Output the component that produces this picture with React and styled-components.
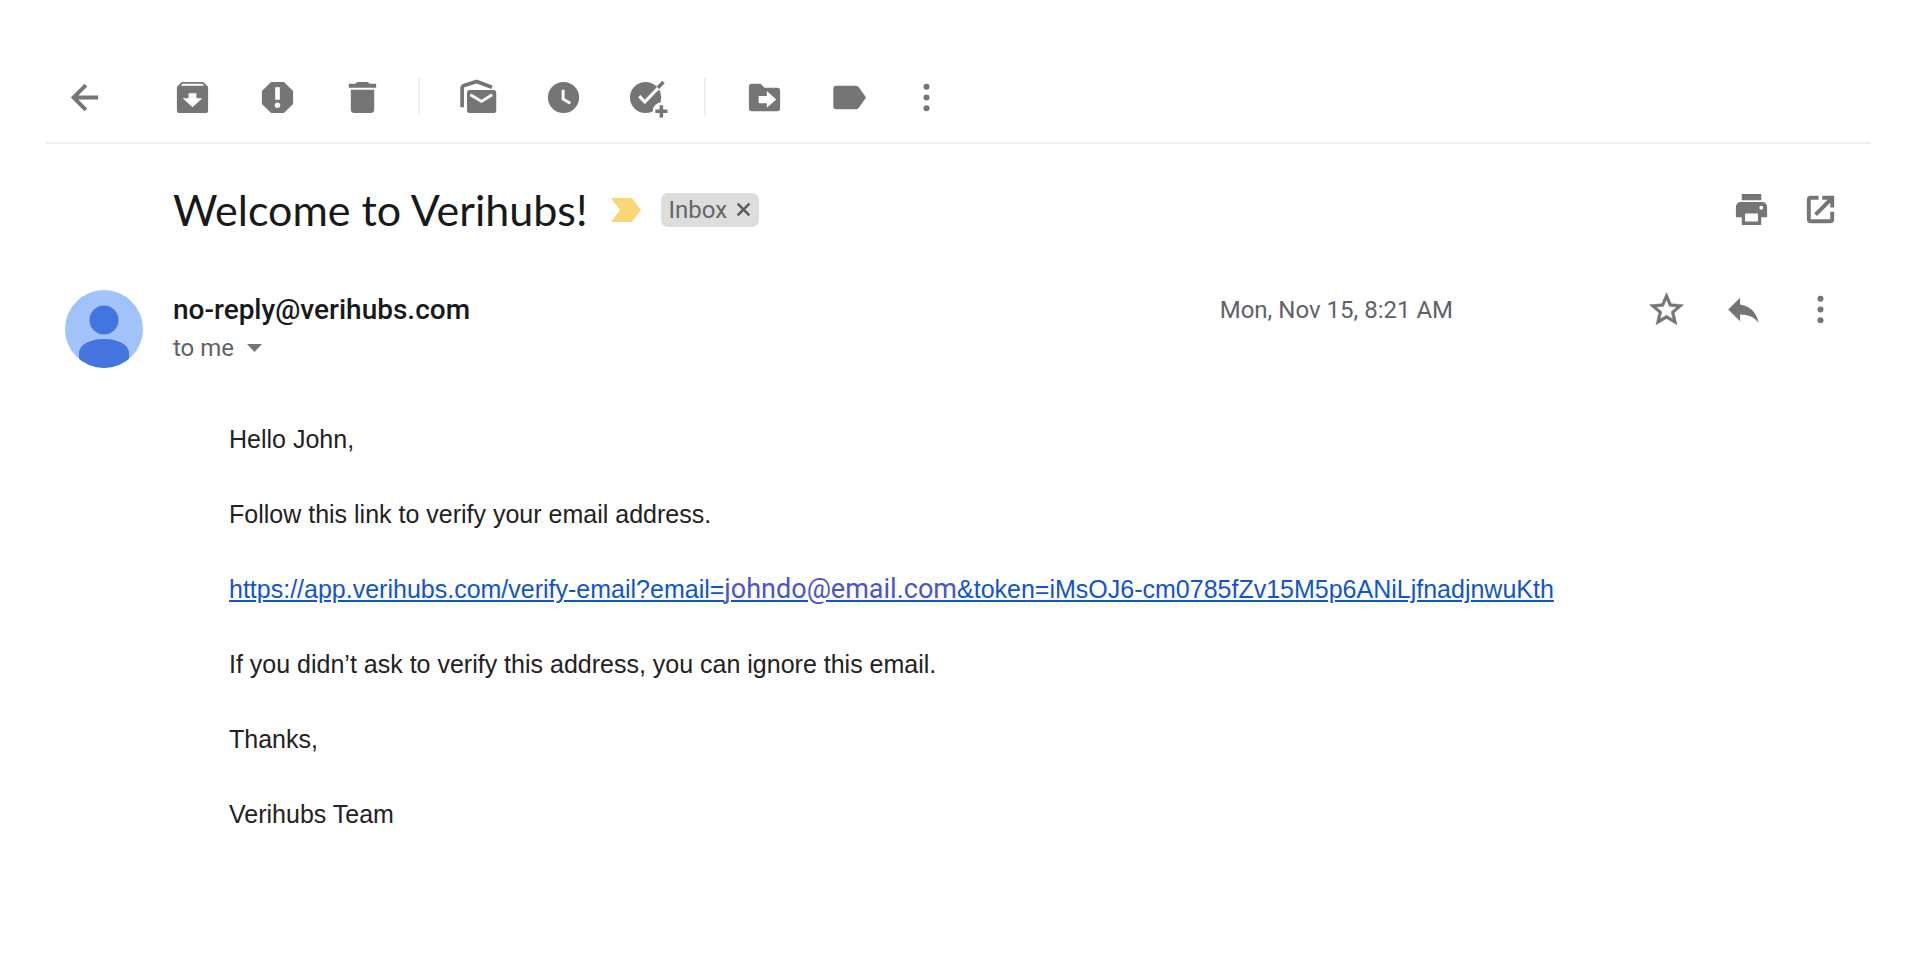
import React from "react";
import styled, { createGlobalStyle } from "styled-components";

const GlobalStyle = createGlobalStyle`
  *, *::before, *::after { box-sizing: border-box; }
  body {
    margin: 0;
    background: #fff;
    color: #18191b;
    font-family: Roboto, "Liberation Sans", sans-serif;
  }
  p, h1, h2 { margin: 0; }
`;

const Page = styled.main`
  padding: 52px 49px 120px 46px;
`;

const Toolbar = styled.header`
  display: flex;
  align-items: center;
  height: 92px;
  padding-left: 19px;
  border-bottom: 2px solid #eeeff0;
`;

const Group = styled.div`
  display: flex;
  gap: 46px;
  margin-left: ${(p) => p.$offset || 0}px;
`;

const Divider = styled.span`
  width: 2px;
  height: 38px;
  margin-left: 36px;
  background: #eeeff0;
`;

const IconButton = styled.button`
  display: flex;
  flex: none;
  width: 39px;
  height: 39px;
  padding: 0;
  border: 0;
  background: none;
  color: #757575;
  cursor: pointer;
`;

const Drawing = styled.svg`
  display: block;
  width: 100%;
  height: 100%;
  overflow: visible;
  fill: currentColor;
`;

const SubjectRow = styled.div`
  display: flex;
  align-items: center;
  height: 131px;
  padding: 0 31px 0 127px;
`;

const Subject = styled.h1`
  font: 400 43px/52px Lato, Roboto, sans-serif;
`;

const Marker = styled.svg`
  width: 30px;
  height: 24px;
  margin-left: 23px;
  fill: #fad776;
`;

const Chip = styled.span`
  display: flex;
  align-items: center;
  gap: 9px;
  height: 34px;
  margin-left: 20px;
  padding: 0 8px;
  border-radius: 7px;
  background: #ddd;
  color: #666;
  font-size: 24px;
  line-height: 34px;
`;

const ChipClose = styled.button`
  width: 15px;
  height: 15px;
  padding: 0;
  border: 0;
  background: none;
  color: #5a5a5a;
  cursor: pointer;
`;

const Actions = styled.div`
  display: flex;
  gap: ${(p) => p.$gap}px;
  margin-left: ${(p) => (p.$push ? "auto" : "194px")};
`;

const SenderRow = styled.div`
  display: flex;
  align-items: flex-start;
  padding: 15px 31px 0 19px;
`;

const Avatar = styled.svg`
  width: 78px;
  height: 78px;
  flex: none;
`;

const Sender = styled.div`
  margin-left: 30px;
`;

const Name = styled.h2`
  font-size: 28px;
  font-weight: 500;
  line-height: 40px;
`;

const Recipient = styled.button`
  display: flex;
  align-items: center;
  gap: 13px;
  padding: 0;
  border: 0;
  background: none;
  color: #5f6368;
  font: 400 24px/36px Roboto, sans-serif;
  cursor: pointer;
`;

const Caret = styled.svg`
  width: 15px;
  height: 8px;
  fill: #757575;
`;

const SentAt = styled.time`
  margin-left: auto;
  color: #5f6368;
  font-size: 24px;
  line-height: 40px;
`;

const Message = styled.article`
  display: flex;
  flex-direction: column;
  gap: 40px;
  padding: 54px 0 0 183px;
  color: #222;
  font: 400 25px/35px "Liberation Sans", Arial, sans-serif;
`;

const VerifyLink = styled.a`
  color: #15c;
  overflow-wrap: anywhere;
`;

const Address = styled.span`
  color: #4a55cc;
  font-family: Roboto, sans-serif;
  font-size: 27px;
`;

const shapes = {
  back: <path d="M17 9H6.83l4.6-4.6L10 3l-7 7 7 7 1.41-1.4L6.83 11H17z" />,
  archive: (
    <path
      fillRule="evenodd"
      d="M4.5 2h11L18 4.5v12a1.5 1.5 0 0 1-1.5 1.5h-13A1.5 1.5 0 0 1 2 16.5v-12zM4.8 2.9 4 4h12l-.8-1.1zM8 7.8v2.6H5l5 4.6 5-4.6h-3V7.8z"
    />
  ),
  spam: (
    <path
      fillRule="evenodd"
      d="M6.7 2h6.6L18 6.7v6.6L13.3 18H6.7L2 13.3V6.7zM8.8 4.8v6.4h2.4V4.8zM10 12.6a1.4 1.4 0 1 0 0 2.8 1.4 1.4 0 0 0 0-2.8z"
    />
  ),
  trash: <path d="M7.3 2h5.4l.9 1H17v2H3V3h3.4zM4 6h12v10.2a1.8 1.8 0 0 1-1.8 1.8H5.8A1.8 1.8 0 0 1 4 16.2z" />,
  unread: (
    <>
      <path d="M1.6 15V5q0-.7.6-1L9 1.8l7.9 2.900" fill="none" stroke="currentColor" strokeWidth="1.9" />
      <rect x="4.1" y="6.2" width="15" height="11.8" rx="1.5" />
      <path d="m5.9 8.6 5.6 3.4 5.5-3.4" fill="none" stroke="#fff" strokeWidth="1.5" />
    </>
  ),
  clock: (
    <>
      <circle cx="10" cy="10" r="8" />
      <path d="M9.8 6v4.8l3.7 2.2" fill="none" stroke="#fff" strokeWidth="1.5" />
    </>
  ),
  task: (
    <>
      <circle cx="8.5" cy="10" r="8" />
      <path d="m5.3 9.3 2.8 3L16.5 3.5" fill="none" stroke="#fff" strokeWidth="1.6" />
      <path d="m14.8 5 2.9-2.900" fill="none" stroke="currentColor" strokeWidth="1.8" />
      <circle cx="16.8" cy="17" r="4.6" fill="#fff" />
      <path d="M16.6 14v6.2M13.5 17.1h6.2" fill="none" stroke="currentColor" strokeWidth="1.8" />
    </>
  ),
  move: (
    <path
      fillRule="evenodd"
      d="M3.5 3H8l2 2h6.5A1.5 1.5 0 0 1 18 6.5v9a1.5 1.5 0 0 1-1.5 1.5h-13A1.5 1.5 0 0 1 2 15.5v-11A1.5 1.5 0 0 1 3.5 3zM7 9.2v3.7h4.2v2.4L16 11l-4.8-4.3v2.5z"
    />
  ),
  label: <path d="M3.2 4h10q1 0 1.6.8L18.5 10l-3.7 5.2q-.6.8-1.6.8h-10a1.5 1.5 0 0 1-1.5-1.5v-9A1.5 1.5 0 0 1 3.2 4z" />,
  more: (
    <>
      <circle cx="10" cy="4.5" r="1.55" />
      <circle cx="10" cy="10" r="1.55" />
      <circle cx="10" cy="15.5" r="1.55" />
    </>
  ),
  print: (
    <path
      fillRule="evenodd"
      d="M5 2h10v3.2H5zM4.4 6.2h11.2A2.4 2.4 0 0 1 18 8.6V14h-3v4H5v-4H2V8.6a2.4 2.4 0 0 1 2.4-2.4zM6.7 12v4.2h6.6V12zM15 8.1a1 1 0 1 0 0 2 1 1 0 0 0 0-2z"
    />
  ),
  popout: (
    <>
      <path d="M9 4H5a1 1 0 0 0-1 1v10a1 1 0 0 0 1 1h10a1 1 0 0 0 1-1V11.2" fill="none" stroke="currentColor" strokeWidth="2" />
      <path d="M10.9 3H17v6h-2V6.5l-6.8 6.8-1.400-1.400L13.600 5h-2.700z" />
    </>
  ),
  star: (
    <path d="M22 9.24l-7.19-.62L12 2 9.19 8.63 2 9.24l5.46 4.73L5.82 21 12 17.27 18.18 21l-1.63-7.03L22 9.24zM12 15.4l-3.76 2.27 1-4.28-3.32-2.88 4.38-.38L12 6.1l1.71 4.04 4.38.38-3.32 2.88 1 4.28L12 15.4z" stroke="currentColor" strokeWidth="0.3" />
  ),
  reply: <path d="M10 9V5l-7 7 7 7v-4.1c5 0 8.5 1.6 11 5.1-1-5-4-10-11-11z" />,
};

function Action({ icon, label, viewBox = "0 0 20 20" }) {
  return (
    <IconButton type="button" aria-label={label} title={label}>
      <Drawing viewBox={viewBox} aria-hidden="true">
        {shapes[icon]}
      </Drawing>
    </IconButton>
  );
}

export default function App() {
  return (
    <>
      <GlobalStyle />
      <Page>
        <Toolbar>
          <Group>
            <Action icon="back" label="Back" />
          </Group>
          <Group $offset={69}>
            <Action icon="archive" label="Archive" />
            <Action icon="spam" label="Report spam" />
            <Action icon="trash" label="Delete" />
          </Group>
          <Divider />
          <Group $offset={39}>
            <Action icon="unread" label="Mark as unread" />
            <Action icon="clock" label="Snooze" />
            <Action icon="task" label="Add to tasks" />
          </Group>
          <Divider />
          <Group $offset={39}>
            <Action icon="move" label="Move to" />
            <Action icon="label" label="Labels" />
          </Group>
          <Group $offset={38}>
            <Action icon="more" label="More" />
          </Group>
        </Toolbar>

        <SubjectRow>
          <Subject>Welcome to Verihubs!</Subject>
          <Marker viewBox="0 0 30 24" aria-hidden="true">
            <path d="M0 0h19q2 0 3 1.5L30 12l-8 10.500Q21 24 19 24H0l9-12z" />
          </Marker>
          <Chip>
            Inbox
            <ChipClose type="button" aria-label="Remove label Inbox">
              <Drawing viewBox="0 0 14 14" aria-hidden="true">
                <path d="m1.5 1.5 11 11m0-11-11 11" stroke="currentColor" strokeWidth="2.3" />
              </Drawing>
            </ChipClose>
          </Chip>
          <Actions $push $gap={30}>
            <Action icon="print" label="Print" />
            <Action icon="popout" label="Open in new window" />
          </Actions>
        </SubjectRow>

        <SenderRow>
          <Avatar viewBox="0 0 78 78" role="img" aria-label="Sender">
            <clipPath id="face">
              <circle cx="39" cy="39" r="39" />
            </clipPath>
            <g clipPath="url(#face)">
              <rect width="78" height="78" fill="#a1c2fa" />
              <circle cx="39" cy="30" r="14.5" fill="#4374e0" />
              <path d="M14 78V63c0-8 11-14 25-14s25 6 25 14v15z" fill="#4374e0" />
            </g>
          </Avatar>
          <Sender>
            <Name>no-reply@verihubs.com</Name>
            <Recipient type="button">
              to me
              <Caret viewBox="0 0 15 8" aria-hidden="true">
                <path d="M0 0h15L7.5 8z" />
              </Caret>
            </Recipient>
          </Sender>
          <SentAt>Mon, Nov 15, 8:21 AM</SentAt>
          <Actions $gap={38}>
            <Action icon="star" label="Star" viewBox="0.5 0.5 23 23" />
            <Action icon="reply" label="Reply" viewBox="0.5 0.5 23 23" />
            <Action icon="more" label="More" />
          </Actions>
        </SenderRow>

        <Message>
          <p>Hello John,</p>
          <p>Follow this link to verify your email address.</p>
          <p>
            <VerifyLink href="#verify">
              https://app.verihubs.com/verify-email?email=<Address>johndo@email.com</Address>
              &amp;token=iMsOJ6-cm0785fZv15M5p6ANiLjfnadjnwuKth
            </VerifyLink>
          </p>
          <p>If you didn’t ask to verify this address, you can ignore this email.</p>
          <p>Thanks,</p>
          <p>Verihubs Team</p>
        </Message>
      </Page>
    </>
  );
}
